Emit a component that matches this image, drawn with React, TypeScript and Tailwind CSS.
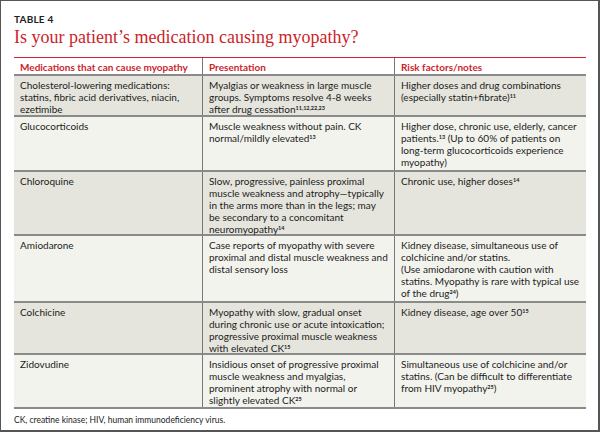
import React from "react";

const S = ({ children }: { children: React.ReactNode }) => (
  <span className="relative -top-[3px] text-[5.5px] leading-none font-bold">{children}</span>
);

type Row = { h: string; bg: string; c: React.ReactNode[] };

const rows: Row[] = [
  {
    h: "h-[41px]",
    bg: "bg-[#e5e5dd]",
    c: [
      <>Cholesterol-lowering medications:<br />statins, fibric acid derivatives, niacin,<br />ezetimibe</>,
      <>Myalgias or weakness in large muscle<br />groups. Symptoms resolve 4-8 weeks<br />after drug cessation<S>11,12,22,23</S></>,
      <>Higher doses and drug combinations<br />(especially statin+fibrate)<S>11</S></>,
    ],
  },
  {
    h: "h-[55px]",
    bg: "bg-[#f3f3ee]",
    c: [
      <>Glucocorticoids</>,
      <>Muscle weakness without pain. CK<br />normal/mildly elevated<S>13</S></>,
      <>Higher dose, chronic use, elderly, cancer<br />patients.<S>13</S> (Up to 60% of patients on<br />long-term glucocorticoids experience<br />myopathy)</>,
    ],
  },
  {
    h: "h-[64px]",
    bg: "bg-[#e5e5dd]",
    c: [
      <>Chloroquine</>,
      <>Slow, progressive, painless proximal<br />muscle weakness and atrophy—typically<br />in the arms more than in the legs; may<br />be secondary to a concomitant<br />neuromyopathy<S>14</S></>,
      <>Chronic use, higher doses<S>14</S></>,
    ],
  },
  {
    h: "h-[67px]",
    bg: "bg-[#f3f3ee]",
    c: [
      <>Amiodarone</>,
      <>Case reports of myopathy with severe<br />proximal and distal muscle weakness and<br />distal sensory loss</>,
      <>Kidney disease, simultaneous use of<br />colchicine and/or statins.<br />(Use amiodarone with caution with<br />statins. Myopathy is rare with typical use<br />of the drug<S>24</S>)</>,
    ],
  },
  {
    h: "h-[52px]",
    bg: "bg-[#e5e5dd]",
    c: [
      <>Colchicine</>,
      <>Myopathy with slow, gradual onset<br />during chronic use or acute intoxication;<br />progressive proximal muscle weakness<br />with elevated CK<S>15</S></>,
      <>Kidney disease, age over 50<S>15</S></>,
    ],
  },
  {
    h: "h-[54px]",
    bg: "bg-[#f3f3ee]",
    c: [
      <>Zidovudine</>,
      <>Insidious onset of progressive proximal<br />muscle weakness and myalgias,<br />prominent atrophy with normal or<br />slightly elevated CK<S>25</S></>,
      <>Simultaneous use of colchicine and/or<br />statins. (Can be difficult to differentiate<br />from HIV myopathy<S>25</S>)</>,
    ],
  },
];

export default function App() {
  return (
    <div className="w-[600px] h-[432px] bg-white border border-[#555] border-r-2 border-b-2 overflow-hidden" style={{ fontFamily: "Lato, 'Open Sans', sans-serif" }}>
      <div className="pl-[13px] pt-[12px]">
        <div className="text-[10px] font-bold tracking-[0.2px] text-[#222] leading-[12px]">TABLE 4</div>
        <div className="text-[18px] leading-[22px] text-[#cc1f2a] mt-[1px]" style={{ fontFamily: "'Liberation Serif', serif" }}>
          Is your patient’s medication causing myopathy?
        </div>
        <div className="w-[572px] mt-[9px] border-t border-[#d8202e] text-[10px] leading-[12px] text-[#1c1c1c]">
          <div className="grid grid-cols-[189px_192px_191px] h-[18px] border-b-2 border-[#8a8a8a] text-[#cc1f2a] font-bold">
            <div className="pl-[6px] pt-[3px] border-r border-[#777]">Medications that can cause myopathy</div>
            <div className="pl-[6px] pt-[3px] border-r border-[#777]">Presentation</div>
            <div className="pl-[6px] pt-[3px]">Risk factors/notes</div>
          </div>
          {rows.map((r, i) => (
            <div key={i} className={`grid grid-cols-[189px_192px_191px] ${r.h} ${r.bg} border-b-2 border-[#8a8a8a]`}>
              {r.c.map((c, j) => (
                <div key={j} className={`pl-[6px] pt-[3px] whitespace-nowrap ${j < 2 ? "border-r border-[#777]" : ""}`}>
                  {c}
                </div>
              ))}
            </div>
          ))}
        </div>
        <div className="text-[8.5px] leading-[10px] text-[#222] mt-[6px]">CK, creatine kinase; HIV, human immunodeficiency virus.</div>
      </div>
    </div>
  );
}
